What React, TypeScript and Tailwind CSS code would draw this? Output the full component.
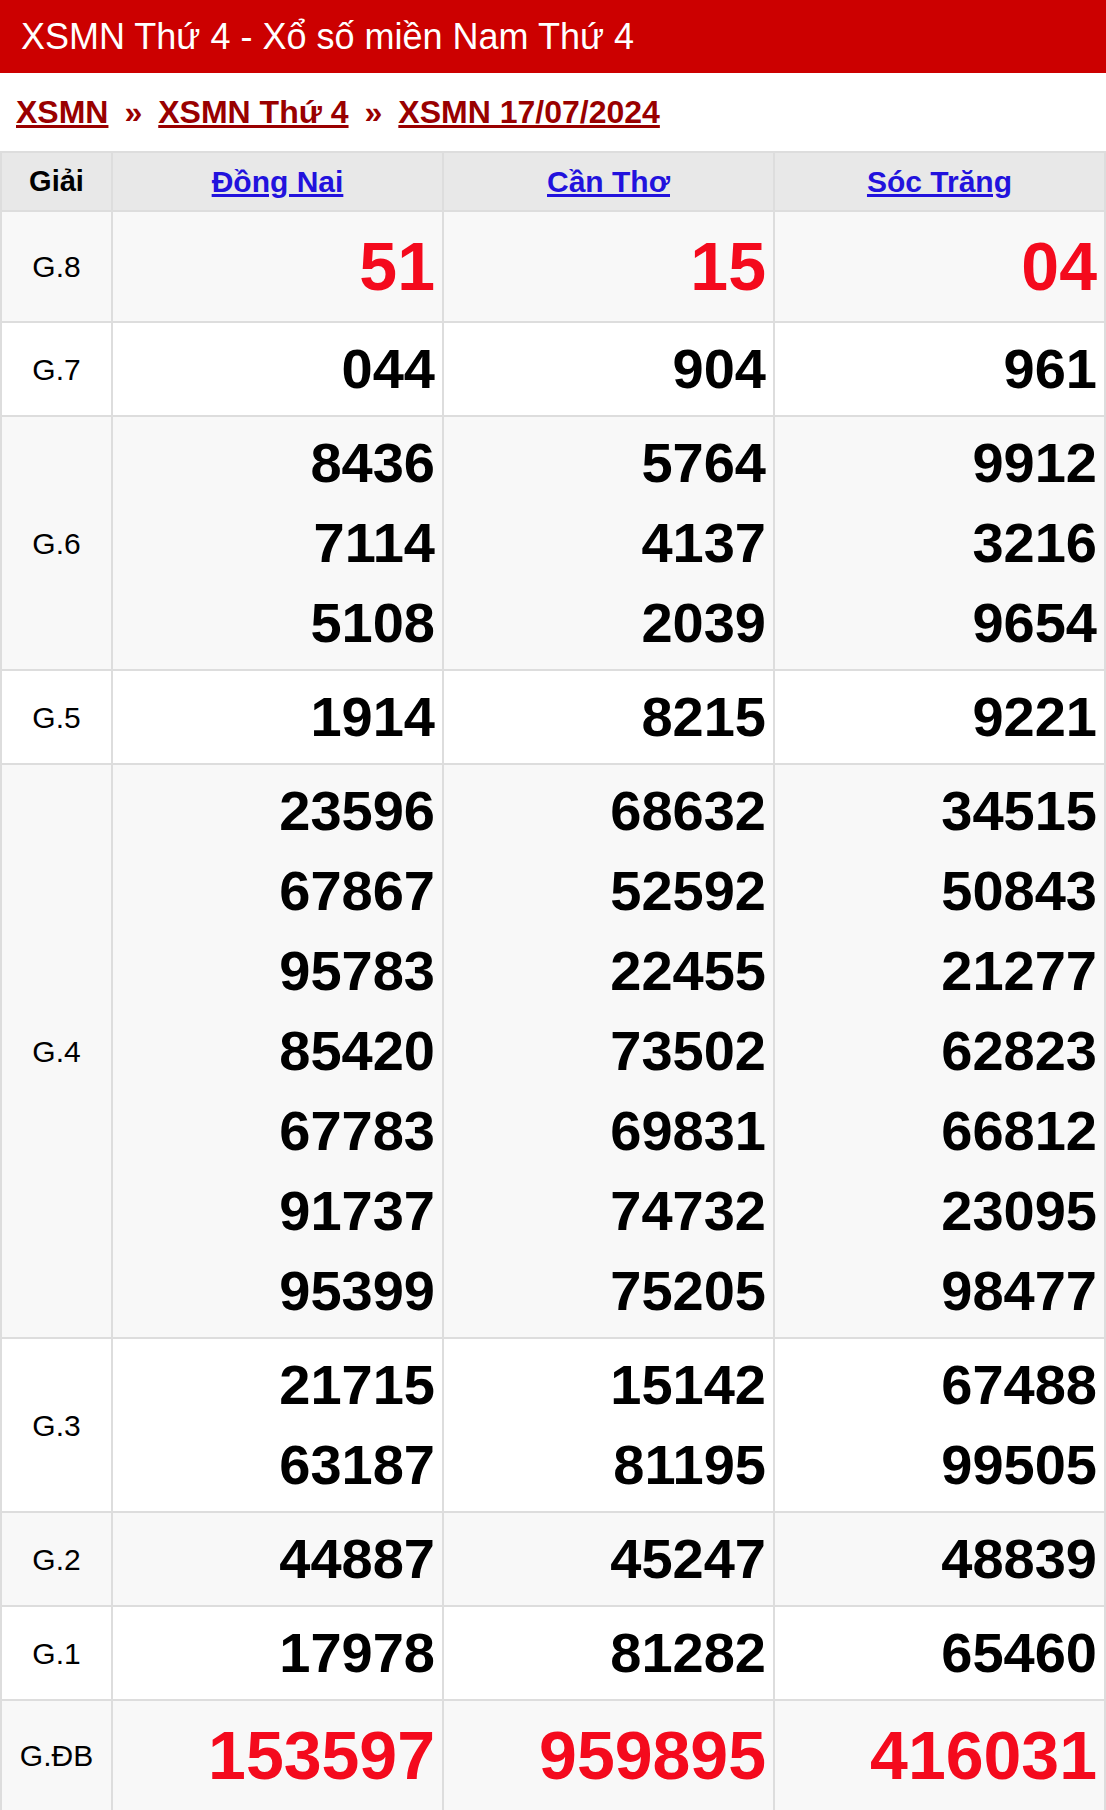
import React from "react";

type Row = { label: string; values: string[][]; special?: boolean; bg: string };

const rows: Row[] = [
  { label: "G.8", values: [["51"], ["15"], ["04"]], special: true, bg: "bg-[#f8f8f8]" },
  { label: "G.7", values: [["044"], ["904"], ["961"]], bg: "bg-white" },
  {
    label: "G.6",
    values: [
      ["8436", "7114", "5108"],
      ["5764", "4137", "2039"],
      ["9912", "3216", "9654"],
    ],
    bg: "bg-[#f8f8f8]",
  },
  { label: "G.5", values: [["1914"], ["8215"], ["9221"]], bg: "bg-white" },
  {
    label: "G.4",
    values: [
      ["23596", "67867", "95783", "85420", "67783", "91737", "95399"],
      ["68632", "52592", "22455", "73502", "69831", "74732", "75205"],
      ["34515", "50843", "21277", "62823", "66812", "23095", "98477"],
    ],
    bg: "bg-[#f8f8f8]",
  },
  {
    label: "G.3",
    values: [
      ["21715", "63187"],
      ["15142", "81195"],
      ["67488", "99505"],
    ],
    bg: "bg-white",
  },
  { label: "G.2", values: [["44887"], ["45247"], ["48839"]], bg: "bg-[#f8f8f8]" },
  { label: "G.1", values: [["17978"], ["81282"], ["65460"]], bg: "bg-white" },
  { label: "G.ĐB", values: [["153597"], ["959895"], ["416031"]], special: true, bg: "bg-[#f8f8f8]" },
];

const provinces = ["Đồng Nai", "Cần Thơ", "Sóc Trăng"];

export default function App() {
  return (
    <div
      className="w-[1106px] bg-white text-black"
      style={{ fontFamily: '"Liberation Sans", Arial, Helvetica, sans-serif' }}
    >
      <div className="h-[73px] bg-[#cc0000] flex items-center pl-[21px]">
        <h1 className="text-[36px] font-normal text-white leading-none">
          XSMN Thứ 4 - Xổ số miền Nam Thứ 4
        </h1>
      </div>

      <div className="h-[78px] flex items-center pl-[16px] gap-[16px] text-[32px] font-bold text-[#990000]">
        <a href="#" className="underline">XSMN</a>
        <span>»</span>
        <a href="#" className="underline">XSMN Thứ 4</a>
        <span>»</span>
        <a href="#" className="underline">XSMN 17/07/2024</a>
      </div>

      <table className="w-[1106px] table-fixed border-collapse border-2 border-[#dddddd]">
        <colgroup>
          <col className="w-[111px]" />
          <col />
          <col />
          <col />
        </colgroup>
        <thead>
          <tr className="bg-[#e8e8e8]">
            <th className="border-2 border-[#dddddd] py-[6px] text-[29px] leading-[45px] font-bold text-center">
              Giải
            </th>
            {provinces.map((p) => (
              <th
                key={p}
                className="border-2 border-[#dddddd] py-[6px] text-[30px] leading-[45px] font-bold text-center"
              >
                <a href="#" className="underline text-[#2212dd]">
                  {p}
                </a>
              </th>
            ))}
          </tr>
        </thead>
        <tbody>
          {rows.map((r) => (
            <tr key={r.label} className={r.bg}>
              <td className="border-2 border-[#dddddd] text-center align-middle text-[30px] font-normal">
                {r.label}
              </td>
              {r.values.map((col, ci) => (
                <td
                  key={ci}
                  className="border-2 border-[#dddddd] py-[6px] pr-[7px] text-right align-middle"
                >
                  {col.map((v, vi) =>
                    r.special ? (
                      <div
                        key={vi}
                        className="text-[68px] leading-[97px] font-bold text-[#f40a1d]"
                      >
                        {v}
                      </div>
                    ) : (
                      <div key={vi} className="text-[56px] leading-[80px] font-bold text-black">
                        {v}
                      </div>
                    )
                  )}
                </td>
              ))}
            </tr>
          ))}
        </tbody>
      </table>
    </div>
  );
}
